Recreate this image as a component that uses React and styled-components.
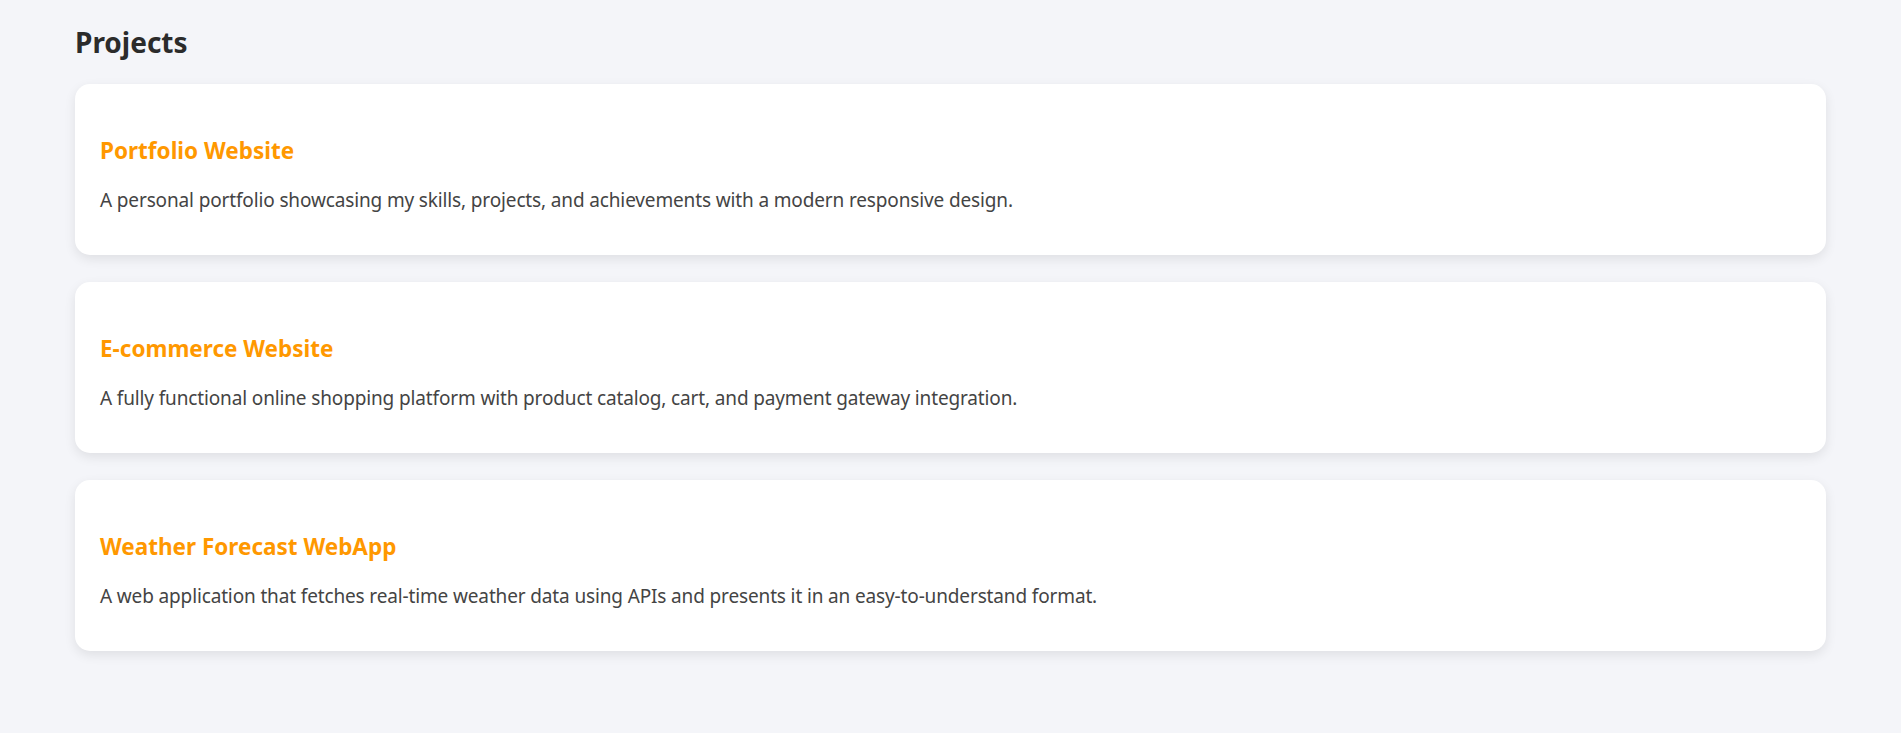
import React from 'react'
import styled, { createGlobalStyle } from 'styled-components'

const GlobalStyle = createGlobalStyle`
  body {
    margin: 0;
    background-color: #f4f5f9;
    font-family: "Segoe UI", "Noto Sans", sans-serif;
    color: #333;
  }
`

const Section = styled.section`
  padding: 24px 75px 60px;
`

const Heading = styled.h2`
  margin: 0 0 24px;
  font-size: 28px;
  line-height: 36px;
  font-weight: 700;
  color: #2b2b2b;
`

const CardList = styled.div`
  display: flex;
  flex-direction: column;
  gap: 27px;
`

const Card = styled.div`
  background-color: #fff;
  border-radius: 15px;
  padding: 25px;
  box-shadow: 0 4px 12px rgba(0, 0, 0, 0.09);
`

const Title = styled.h3`
  margin: 27px 0 21px;
  font-size: 22.5px;
  line-height: 30px;
  font-weight: 700;
  color: #ff9800;
`

const Description = styled.p`
  margin: 0 0 17px;
  font-size: 19px;
  letter-spacing: -0.14px;
  line-height: 26px;
  color: #444;
`

const projects = [
  {
    title: 'Portfolio Website',
    text: 'A personal portfolio showcasing my skills, projects, and achievements with a modern responsive design.',
  },
  {
    title: 'E-commerce Website',
    text: 'A fully functional online shopping platform with product catalog, cart, and payment gateway integration.',
  },
  {
    title: 'Weather Forecast WebApp',
    text: 'A web application that fetches real-time weather data using APIs and presents it in an easy-to-understand format.',
  },
]

const App = () => {
  return (
    <>
      <GlobalStyle />
      <Section>
        <Heading>Projects</Heading>
        <CardList>
          {projects.map((p) => (
            <Card key={p.title}>
              <Title>{p.title}</Title>
              <Description>{p.text}</Description>
            </Card>
          ))}
        </CardList>
      </Section>
    </>
  )
}

export default App
